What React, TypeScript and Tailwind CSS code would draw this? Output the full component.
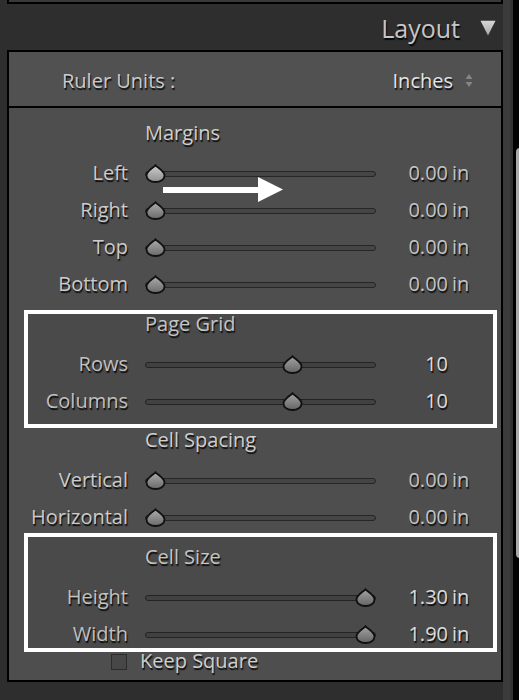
import React from "react";

type Row = { label: string; frac: number; num: string; unit: string; bright?: boolean; light?: boolean };

const groups: { title: string; rows: Row[] }[] = [
  {
    title: "Margins",
    rows: [
      { label: "Left", frac: 0, num: "0.00", unit: "in", light: true },
      { label: "Right", frac: 0, num: "0.00", unit: "in" },
      { label: "Top", frac: 0, num: "0.00", unit: "in" },
      { label: "Bottom", frac: 0, num: "0.00", unit: "in" },
    ],
  },
  {
    title: "Page Grid",
    rows: [
      { label: "Rows", frac: 0.65, num: "10", unit: "", bright: true },
      { label: "Columns", frac: 0.65, num: "10", unit: "", bright: true },
    ],
  },
  {
    title: "Cell Spacing",
    rows: [
      { label: "Vertical", frac: 0, num: "0.00", unit: "in" },
      { label: "Horizontal", frac: 0, num: "0.00", unit: "in" },
    ],
  },
  {
    title: "Cell Size",
    rows: [
      { label: "Height", frac: 1, num: "1.30", unit: "in", bright: true },
      { label: "Width", frac: 1, num: "1.90", unit: "in", bright: true },
    ],
  },
];

function Thumb({ light, id }: { light?: boolean; id: string }) {
  return (
    <svg width="21" height="19" viewBox="0 0 21 19">
      <defs>
        <linearGradient id={id} x1="0" y1="0" x2="0" y2="1">
          <stop offset="0" stopColor={light ? "#cfcfcf" : "#adadad"} />
          <stop offset="1" stopColor={light ? "#8e8e8e" : "#6a6a6a"} />
        </linearGradient>
      </defs>
      <path
        d="M10.5 1.2 C12.3 3.6 19.5 7 19.5 11.5 C19.5 15.4 15.5 18 10.5 18 C5.5 18 1.5 15.4 1.5 11.5 C1.5 7 8.7 3.6 10.5 1.2 Z"
        fill={`url(#${id})`}
        stroke="#111"
        strokeWidth="1.8"
      />
    </svg>
  );
}

function SliderRow({ row, id }: { row: Row; id: string }) {
  return (
    <div className="flex h-[37px] items-center">
      <div className="w-[119px] pt-[2px] text-right text-[#cbcbcb]">{row.label}</div>
      <div className="relative ml-[17px] h-[20px] w-[231px] pt-[9px]">
        <div className="h-[6px] w-full rounded-full border border-[#262626] bg-[#454545]" />
        <div className="absolute top-[2px]" style={{ left: `${row.frac * 210}px` }}>
          <Thumb light={row.light} id={id} />
        </div>
      </div>
      <div className={`w-[72px] pt-[2px] text-right ${row.bright ? "text-[#e8e8e8]" : "text-[#c4c4c4]"}`}>{row.num}</div>
      <div className={`w-[22px] pl-[4px] pt-[2px] ${row.bright ? "text-[#e8e8e8]" : "text-[#c4c4c4]"}`}>{row.unit}</div>
    </div>
  );
}

export default function App() {
  return (
    <div
      className="relative flex h-[700px] w-[519px] overflow-hidden bg-[#2e2e2e] text-[20px] leading-[28px] [text-shadow:1px_1.5px_1px_rgba(0,0,0,0.85)]"
      style={{ fontFamily: '"Open Sans", "Noto Sans", sans-serif' }}
    >
      <div className="flex w-[503px] flex-col">
        <div className="ml-[7px] h-[4px] w-[496px] border-x-2 border-b-2 border-black bg-[#383838]" />
        <div className="flex h-[46px] items-center justify-end gap-[20px] pr-[7px] pt-[2px]">
          <span className="text-[25px] leading-[34px] text-[#c6c6c6]">Layout</span>
          <svg width="16" height="16" viewBox="0 0 16 16">
            <defs>
              <linearGradient id="tri" x1="0" y1="0" x2="0" y2="1">
                <stop offset="0" stopColor="#d6d6d6" />
                <stop offset="1" stopColor="#a8a8a8" />
              </linearGradient>
            </defs>
            <path d="M0.5 0.8 L15.5 0.8 L8 15.5 Z" fill="url(#tri)" />
          </svg>
        </div>
        <div className="ml-[7px] flex w-[496px] flex-col border-2 border-black">
          <div className="flex h-[56px] items-center justify-between border-b-2 border-black bg-[#515151] pl-[53px] pr-[28px] pt-[3px]">
            <span className="text-[#cbcbcb]">Ruler Units :</span>
            <div className="flex items-center gap-[12px]">
              <span className="text-[#e4e4e4]">Inches</span>
              <svg width="8" height="15" viewBox="0 0 8 15">
                <path d="M4 1 L7.5 6 L0.5 6 Z" fill="#858585" />
                <path d="M4 14 L7.5 9 L0.5 9 Z" fill="#858585" />
              </svg>
            </div>
          </div>
          <div className="flex flex-col bg-[#4e4e4e] pb-[12px] pt-[3px]">
            {groups.map((g, gi) => (
              <div key={g.title} className="flex flex-col">
                <div className="h-[42.6px] pl-[136px] pt-[7px] leading-[29px] text-[#cfcfcf]">{g.title}</div>
                {g.rows.map((r, ri) => (
                  <SliderRow key={r.label} row={r} id={`th-${gi}-${ri}`} />
                ))}
              </div>
            ))}
            <div className="flex h-[17px] items-center pl-[102px]">
              <div className="mt-[5px] h-[16px] w-[16px] shrink-0 border-[1.5px] border-[#2c2c2c] bg-[#474747]" />
              <span className="ml-[13px] pt-[2px] text-[#cfcfcf]">Keep Square</span>
            </div>
          </div>
        </div>
      </div>
      <div className="flex w-[10px]">
        <div className="w-[7px] bg-[#3b3b3b]" />
        <div className="w-[3px] bg-[#313131]" />
      </div>
      <div className="w-[6px] bg-black pl-[3px] pt-[148px]">
        <div className="h-[410px] w-[8px] rounded-full bg-[#a9a9a9]" />
      </div>

      {/* annotations */}
      <div className="pointer-events-none absolute left-[24px] top-[310px] h-[118px] w-[473px] border-4 border-white bg-black/[0.05]" />
      <div className="pointer-events-none absolute left-[24px] top-[533px] h-[119px] w-[473px] border-4 border-white bg-black/[0.05]" />
      <svg className="pointer-events-none absolute left-[160px] top-[175px]" width="126" height="30" viewBox="0 0 126 30">
        <rect x="3" y="12" width="98" height="6" fill="#fff" />
        <path d="M98 2 L123 14.5 L98 27 Z" fill="#fff" />
      </svg>
    </div>
  );
}
